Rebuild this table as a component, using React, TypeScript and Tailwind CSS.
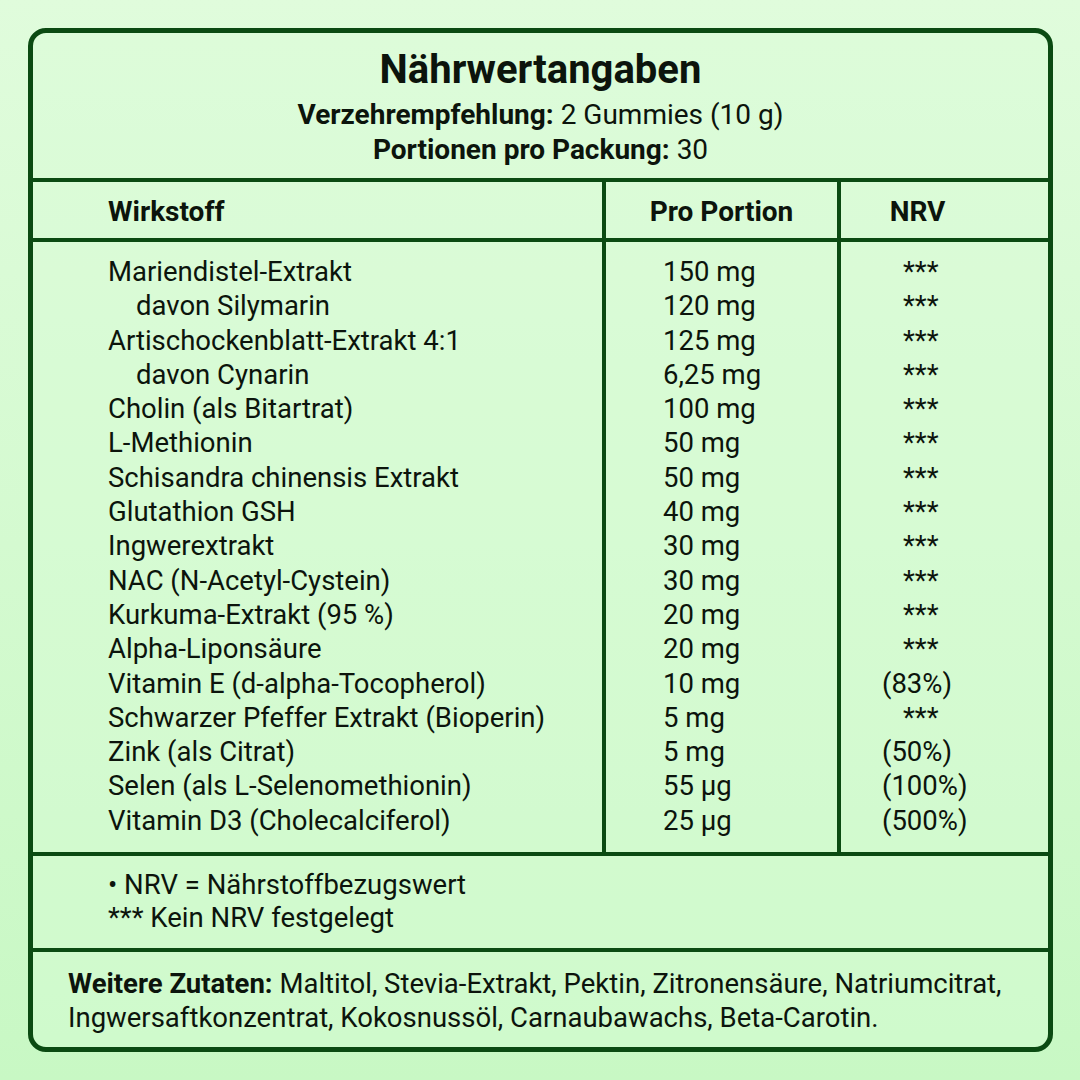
import React from "react"

type Row = { name: string; amount: string; nrv: string; sub?: boolean }

const ROWS: Row[] = [
  { name: "Mariendistel-Extrakt", amount: "150 mg", nrv: "***" },
  { name: "davon Silymarin", amount: "120 mg", nrv: "***", sub: true },
  { name: "Artischockenblatt-Extrakt 4:1", amount: "125 mg", nrv: "***" },
  { name: "davon Cynarin", amount: "6,25 mg", nrv: "***", sub: true },
  { name: "Cholin (als Bitartrat)", amount: "100 mg", nrv: "***" },
  { name: "L-Methionin", amount: "50 mg", nrv: "***" },
  { name: "Schisandra chinensis Extrakt", amount: "50 mg", nrv: "***" },
  { name: "Glutathion GSH", amount: "40 mg", nrv: "***" },
  { name: "Ingwerextrakt", amount: "30 mg", nrv: "***" },
  { name: "NAC (N-Acetyl-Cystein)", amount: "30 mg", nrv: "***" },
  { name: "Kurkuma-Extrakt (95 %)", amount: "20 mg", nrv: "***" },
  { name: "Alpha-Liponsäure", amount: "20 mg", nrv: "***" },
  { name: "Vitamin E (d-alpha-Tocopherol)", amount: "10 mg", nrv: "(83%)" },
  { name: "Schwarzer Pfeffer Extrakt (Bioperin)", amount: "5 mg", nrv: "***" },
  { name: "Zink (als Citrat)", amount: "5 mg", nrv: "(50%)" },
  { name: "Selen (als L-Selenomethionin)", amount: "55 µg", nrv: "(100%)" },
  { name: "Vitamin D3 (Cholecalciferol)", amount: "25 µg", nrv: "(500%)" },
]

export default function App() {
  return (
    <div
      className="w-[1080px] h-[1080px] bg-gradient-to-b from-[#e0fcdc] to-[#c8f8c4] pt-[28px] pl-[28px] text-[#0c140c]"
      style={{ fontFamily: "Roboto, 'Noto Sans', sans-serif" }}
    >
      <div className="w-[1025px] h-[1024px] border-[5px] border-[#0b4a12] rounded-[18px] flex flex-col overflow-hidden bg-[#dafcd6]/40">
        {/* header */}
        <div className="h-[149px] border-b-4 border-[#0b4a12] text-center pt-[15px]">
          <h1 className="text-[40px] leading-[44px] font-bold">Nährwertangaben</h1>
          <div className="mt-[5px] text-[28px] leading-[35px]">
            <p>
              <span className="font-bold">Verzehrempfehlung:</span> 2 Gummies (10 g)
            </p>
            <p>
              <span className="font-bold">Portionen pro Packung:</span> 30
            </p>
          </div>
        </div>

        {/* column heads */}
        <div className="h-[60px] border-b-4 border-[#0b4a12] grid grid-cols-[573px_235px_1fr] text-[28px] font-bold">
          <div className="border-r-4 border-[#0b4a12] flex items-center pl-[75px] pt-[3px]">Wirkstoff</div>
          <div className="border-r-4 border-[#0b4a12] flex items-center justify-center pt-[3px]">Pro Portion</div>
          <div className="flex items-center justify-center pr-[54px] pt-[3px]">NRV</div>
        </div>

        {/* data */}
        <div className="h-[614px] border-b-4 border-[#0b4a12] grid grid-cols-[573px_235px_1fr] text-[27.5px] leading-[34.3px]">
          <div className="border-r-4 border-[#0b4a12] pl-[75px] pt-[13px]">
            {ROWS.map((r) => (
              <div key={r.name} className={r.sub ? "pl-[28px]" : ""}>
                {r.name}
              </div>
            ))}
          </div>
          <div className="border-r-4 border-[#0b4a12] pl-[57px] pt-[13px]">
            {ROWS.map((r) => (
              <div key={r.name}>{r.amount}</div>
            ))}
          </div>
          <div className="pl-[41px] pt-[13px]">
            {ROWS.map((r) => (
              <div key={r.name} className={r.nrv === "***" ? "pl-[21px]" : ""}>
                {r.nrv}
              </div>
            ))}
          </div>
        </div>

        {/* notes */}
        <div className="h-[96px] border-b-4 border-[#0b4a12] pl-[75px] pt-[12px] text-[27.5px] leading-[33px]">
          <p>• NRV = Nährstoffbezugswert</p>
          <p>*** Kein NRV festgelegt</p>
        </div>

        {/* ingredients */}
        <div className="flex-1 pl-[35px] pt-[15px] text-[27.5px] leading-[34px]">
          <p className="whitespace-nowrap">
            <span className="font-bold">Weitere Zutaten:</span> Maltitol, Stevia-Extrakt, Pektin, Zitronensäure, Natriumcitrat,
            <br />
            Ingwersaftkonzentrat, Kokosnussöl, Carnaubawachs, Beta-Carotin.
          </p>
        </div>
      </div>
    </div>
  )
}
